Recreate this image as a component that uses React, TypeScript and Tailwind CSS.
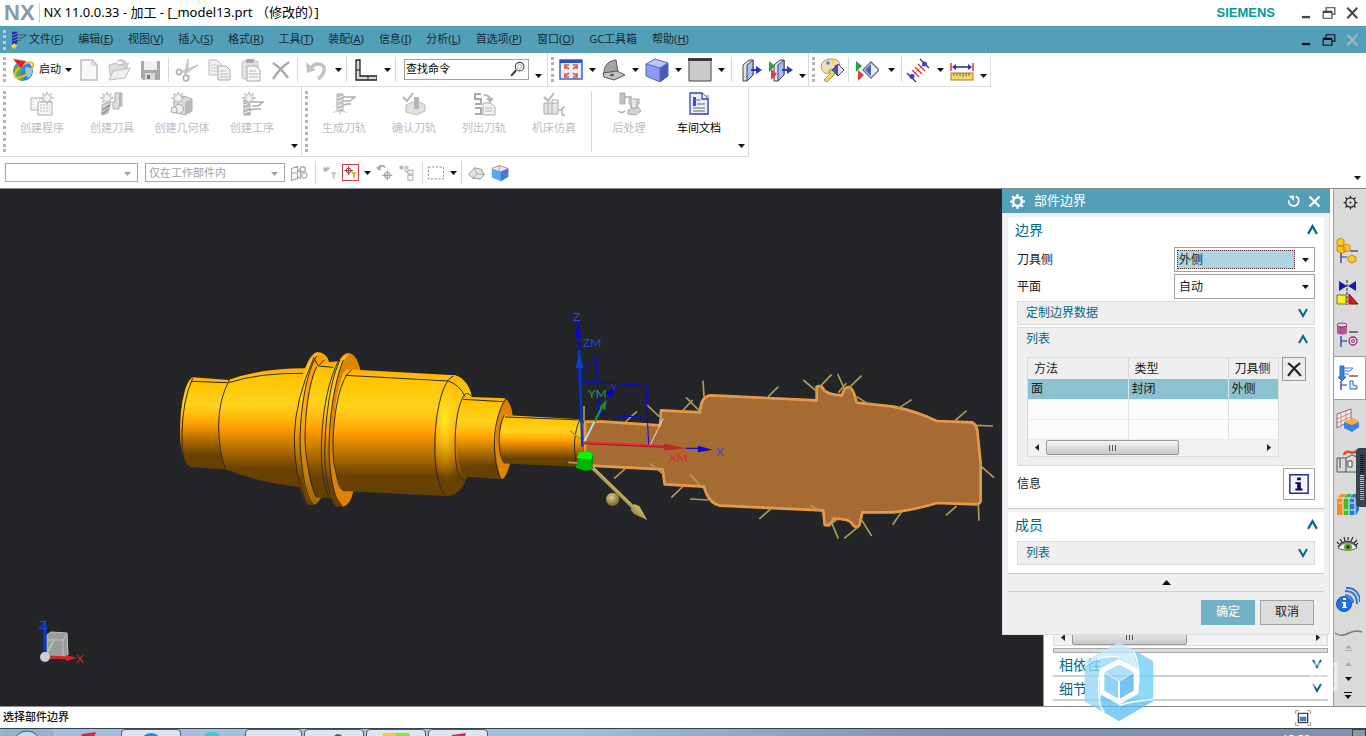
import { useState, type ReactNode } from 'react';
import clsx from 'clsx';

interface IconProps { size?: number; children: ReactNode; }

const Icon = ({ size = 24, children }: IconProps) => (
  <svg width={size} height={size} viewBox="0 0 24 24" fill="none" aria-hidden="true" className="shrink-0">
    {children}
  </svg>
);

const Arrow = ({ gray }: { gray?: boolean }) => (
  <svg width="7" height="4" viewBox="0 0 7 4" aria-hidden="true" className="shrink-0">
    <path d="M0 0h7L3.5 4z" fill={gray ? '#a0a0a0' : '#111'} />
  </svg>
);

const Chevron = ({ up, size = 10 }: { up?: boolean; size?: number }) => (
  <svg width={size} height={size} viewBox="0 0 10 10" fill="none" aria-hidden="true" className="shrink-0">
    <path d={up ? 'M1 9l4-7 4 7' : 'M1 1l4 7 4-7'} stroke="#046587" strokeWidth="2" />
  </svg>
);

const Grip = ({ narrow }: { narrow?: boolean }) => (
  <div className={clsx('shrink-0 py-1 pl-[3px]', narrow ? 'w-[7px]' : 'w-[9px]')}>
    <div className="h-full border-l-[3px] border-dotted border-[#b4b4b4]" />
  </div>
);
const Sep = () => <div className="mx-[2px] my-1 w-px shrink-0 bg-[#d9d9d9]" />;

const Drop = ({ w, low, label }: { w: string; low?: boolean; label: string }) => (
  <button aria-label={label} className={clsx('flex shrink-0 justify-center', w, low ? 'items-end pb-2' : 'items-center')}>
    <Arrow />
  </button>
);

const Tool = ({ w, label, children }: { w: string; label: string; children: ReactNode }) => (
  <button aria-label={label} className={clsx('flex shrink-0 items-center justify-center', w)}>{children}</button>
);

/* ---------- icons ---------- */
const Star = ({ x, y }: { x: number; y: number }) => (
  <path transform={`translate(${x} ${y})`} d="M0-6l1.3 3.4L4.5-4.5 2.8-1.2 6.5 0 2.8 1.2 4.5 4.5 1.3 2.8 0 6-1.3 2.8-4.5 4.5-2.8 1.2-6.5 0-2.8-1.2-4.5-4.5-1.3-2.6z" fill="#f2f2f2" stroke="#b5b5b5" strokeWidth=".9" />
);
const Globe = () => (
  <Icon>
    <circle cx="12" cy="13" r="10" fill="#2f86dc" />
    <path d="M4 9c4-3 8 0 6 5s4 4 2 9C5 22 1 16 4 9z" fill="#5cb13a" />
    <path d="M15 9c4 0 7 2 6 6s-4 6-5 4-3-8-1-10z" fill="#7cc7f4" />
    <ellipse cx="13" cy="12" rx="11" ry="5" transform="rotate(-38 13 12)" stroke="#e3bb3e" strokeWidth="2" />
    <path d="M2 1l13 2-5 8z" fill="#d6272c" stroke="#f08a86" strokeWidth=".6" />
  </Icon>
);
const Page = () => <Icon><path d="M4 2h11l5 5v15H4z" fill="#f8f8f8" stroke="#bcbcbc" strokeWidth="1.5" /><path d="M15 2v5h5" stroke="#bcbcbc" /></Icon>;
const Folder = () => (
  <Icon><path d="M2 7l7-2 3 2 8-2v6L4 22z" fill="#ddd" stroke="#bbb" /><path d="M2 22l4-9 17-3-5 10z" fill="#efefef" stroke="#bbb" /><path d="M10 4c3-4 8-3 10 2l2-1-3 5-4-3 2-1c-1-3-4-4-7-2z" fill="#d4d4d4" stroke="#b5b5b5" strokeWidth=".6" /></Icon>
);
const Save = () => <Icon><path d="M3 3h19v19H5l-2-2z" fill="#a8a8a8" /><path d="M6 3h13v9H6z" fill="#f0f0f0" /><path d="M7 15h10v7H7z" fill="#d8d8d8" /><path d="M9 17h3v4H9z" fill="#777" /></Icon>;
const Cut = () => <Icon><path d="M13 1l-3 13 3-1zM23 7L8 13l2 3z" fill="#e4e4e4" stroke="#b8b8b8" /><circle cx="4" cy="14" r="2.600" stroke="#b2b2b2" strokeWidth="1.800" /><circle cx="11" cy="20" r="2.800" stroke="#b2b2b2" strokeWidth="1.800" /></Icon>;
const Copy = () => (
  <Icon><path d="M2 2h8l4 4v11H2z" fill="#f2f2f2" stroke="#bababa" /><path d="M4 7h7M4 10h7M4 13h7" stroke="#c8c8c8" /><path d="M11 8h8l4 4v10H11z" fill="#f2f2f2" stroke="#a8a8a8" /><path d="M13 13h6M13 16h8M13 19h8" stroke="#b8b8b8" /></Icon>
);
const Paste = () => (
  <Icon><rect x="3" y="3" width="16" height="18" rx="2" fill="#e2e2e2" stroke="#bcbcbc" /><rect x="7" y="1" width="8" height="4" rx="1" fill="#aaa" /><path d="M8 8h9l4 4v11H8z" fill="#f7f7f7" stroke="#a8a8a8" /><path d="M10 13h7M10 16h9M10 19h9" stroke="#b8b8b8" /></Icon>
);
const Del = () => <Icon><path d="M4 5c5 3 10 8 15 15M20 4C14 8 9 13 4 21" stroke="#a9a9a9" strokeWidth="2.4" /></Icon>;
const Undo = () => <Icon><path d="M7 10c4-6 15-5 13 3-1 4-3 6-6 8" stroke="#c2c2c2" strokeWidth="3.500" /><path d="M2 4l1 11 9-3z" fill="#c2c2c2" /></Icon>;
const EdgeBar = () => <Icon><path d="M3 2h4v16h17v4H3z" fill="#d8d8d8" stroke="#222" strokeWidth="1.3" /><path d="M3 12h4M15 18v4" stroke="#222" /></Icon>;
const Fit = () => (
  <Icon><path d="M1 2h22v19H1z" fill="#e8f0ff" stroke="#3b62d8" strokeWidth="1.5" /><path d="M1 2h22v3H1z" fill="#2a50c8" /><path d="M6 8l4 3M18 8l-4 3M6 18l4-3M18 18l-4-3" stroke="#e8532c" strokeWidth="1.6" /><path d="M6 11V7h4M14 7h4v4M6 15v4h4M14 19h4v-4" stroke="#e8532c" strokeWidth="1.6" /></Icon>
);
const Bracket3d = () => <Icon><path d="M2 13C3 6 7 3 14 2l2 12-12 5z" fill="#a5a5a5" stroke="#555" /><path d="M1 15l14-2 8 4-11 5-10-3z" fill="#c4c4c4" stroke="#555" /><ellipse cx="10" cy="17" rx="2" ry="1.2" fill="#555" /></Icon>;
const Cube = () => <Icon><path d="M1 6l9-5 13 4v13l-8 6L1 18z" fill="#8b9dec" /><path d="M1 6l9-5 13 4-8 5z" fill="#b9c6fa" /><path d="M15 10l8-5v13l-8 6z" fill="#4a5cba" /><path d="M1 6l14 4v14M15 10l8-5M1 6v12l14 6 8-6V5L10 1z" stroke="#5365c0" /></Icon>;
const Slab = ({ flip }: { flip?: boolean }) => (
  <Icon>
    <path d="M5 7l6-5h4v15l-6 6H5z" fill="#e3e3e3" stroke="#444" /><path d="M9 7l6-5v15l-6 6z" fill="#a9bdf8" stroke="#333b70" />
    <path d="M13 12h7" stroke="#2a30d0" strokeWidth="2" /><path d="M18 8l6 4-6 4z" fill="#2a30d0" />
    {flip && <><path d="M0 3l6 5-6 6z" fill="#27a53b" /><path d="M2 11l6 5-6 6z" fill="#d64040" /></>}
  </Icon>
);
const Palette = () => (
  <Icon><path d="M2 12C-1 5 5 1 11 1s10 3 8 8-8 0-9 4-6 3-8-1z" fill="#f0dfb8" stroke="#a68f5c" /><circle cx="8" cy="5" r="1.8" fill="#2b8be0" /><circle cx="13" cy="4.500" r="1.800" fill="#f4d525" /><circle cx="16" cy="8" r="1.500" fill="#e6432b" /><path d="M9 12h7l-2 5-7 7-3-2 6-6z" fill="#f3d256" stroke="#b3953a" /><path d="M12 12l6-6 6 6-6 6z" fill="#dfe3f8" stroke="#3c4a7a" /><path d="M18 6v12l-6-6z" fill="#3a54b8" /></Icon>
);
const Flip = () => <Icon><path d="M8 12l8-8 8 8-8 8z" fill="#eef0fb" stroke="#6d7486" strokeWidth="1.500" /><path d="M16 6v12l-6-6z" fill="#4a63c8" /><path d="M1 3l6 5-6 6z" fill="#27a53b" /><path d="M3 12l6 5-6 6z" fill="#d64040" /></Icon>;
const Distance = () => <Icon><path d="M14 1l9 9M1 15l9 9" stroke="#333" strokeWidth="1.300" /><path d="M5 19L19 5" stroke="#c33" strokeDasharray="2 1" /><path d="M6 12l7 7M9 9l7 7M12 6l7 7" stroke="#d33" strokeWidth="1.300" /><circle cx="18.500" cy="6" r="2.500" fill="#3344d8" /><circle cx="6" cy="18.500" r="2.500" fill="#3344d8" /></Icon>;
const Ruler = () => <Icon><path d="M1 5v8M23 5v8" stroke="#d22" strokeWidth="1.400" /><path d="M3 9h18" stroke="#2733b8" strokeWidth="1.600" /><path d="M2 9l4-3v6zM22 9l-4-3v6z" fill="#2733b8" /><rect x="1" y="15" width="22" height="7" fill="#f5d868" stroke="#a17e27" /><path d="M4 15v3M7 15v3M10 15v3M13 15v4M16 15v3M19 15v3" stroke="#666" /></Icon>;

const Drill = () => <><path d="M5 2h6v17H5z" fill="#c2c2c2" stroke="#ababab" /><path d="M5 6l6-2M5 10l6-2M5 14l6-2M5 18l6-2" stroke="#f4f4f4" /></>;
const Prog = () => (
  <Icon><path d="M1 6h15v12H1z" fill="#fafafa" stroke="#ababab" /><path d="M3 8h11v8H3z" stroke="#c5c5c5" strokeDasharray="1 2" /><path d="M8 10h14v13H8z" fill="#fafafa" stroke="#ababab" /><path d="M10 13h10M10 16h10M10 19h10" stroke="#b5b5b5" strokeDasharray="2 1" /><Star x={17} y={6} /></Icon>
);
const ToolMake = () => <Icon><path d="M2 13l8-4v4l-2 8-6 2z" fill="#d5d5d5" stroke="#aaa" /><path d="M2 18l8-5M2 22l7-5" stroke="#999" strokeWidth="2" /><path d="M15 1h7v13h-3v3h-6v-7h2z" fill="#ddd" stroke="#ababab" /><path d="M20 1v13" stroke="#b5b5b5" strokeWidth="2" /><Star x={7} y={6} /></Icon>;
const Geo = () => <Icon><path d="M4 8l10-4 8 3v12l-7 4-11-3z" fill="#ddd" stroke="#aaa" /><path d="M15 10l7-3v12l-7 4z" fill="#b8b8b8" /><circle cx="9" cy="17" r="4.500" fill="#eee" stroke="#aaa" /><circle cx="4" cy="18" r="3" fill="#eee" stroke="#aaa" /><Star x={8} y={6} /></Icon>;
const Op = () => <Icon><path d="M4 8h6v15H4z" fill="#bbb" stroke="#a5a5a5" /><path d="M4 13l6-2M4 17l6-2M4 21l6-2" stroke="#f4f4f4" /><path d="M10 10h13l-5 4h-6M10 18l4-1h7" stroke="#adadad" strokeWidth="1.500" /><Star x={9} y={6} /></Icon>;
const Gen = () => <Icon><Drill /><path d="M11 5h12l-5 4h-7M11 13l4-1h4" stroke="#adadad" strokeWidth="1.500" /><path d="M1 21l4-2M8 23v-3M15 21l-4-2" stroke="#c9c9c9" /></Icon>;
const Verify = () => <Icon><path d="M4 13l6-3h8l5 3v6l-8 4-11-3z" fill="#e1e1e1" stroke="#bbb" /><path d="M12 5h5v12h-5z" fill="#b5b5b5" /><path d="M1 5l4 4 6-8" stroke="#b5b5b5" strokeWidth="2" /></Icon>;
const ListPath = () => <Icon><path d="M9 2H3v5h6v5H3M3 16h6v6H3M3 12" stroke="#a8a8a8" strokeWidth="2" /><path d="M12 3c4 0 6 1 6 5" stroke="#b5b5b5" strokeWidth="2" /><path d="M14 6h8l-4 5z" fill="#b5b5b5" /><path d="M11 11h8l4 4v8H11z" fill="#f1f1f1" stroke="#ababab" /><path d="M13 16h7M13 19h7" stroke="#b5b5b5" /></Icon>;
const Simulate = () => <Icon><path d="M2 11h14v11H2z" fill="#e5e5e5" stroke="#aaa" /><path d="M6 11v11M10 8v14M10 8h6v3" stroke="#aaa" /><path d="M16 18h4v5h3M20 18c0-2 1-3 3-3" stroke="#b0b0b0" strokeWidth="1.500" /><path d="M2 5l4 4 6-8" stroke="#b5b5b5" strokeWidth="2" /></Icon>;
const Post = () => <Icon><path d="M3 1h5v11H3z" fill="#c2c2c2" stroke="#ababab" /><path d="M8 5h6l-1 4M1 19c3 2 5 2 7 0" stroke="#aaa" strokeWidth="1.500" /><path d="M12 7h10v5h-2v4h-6v-4h-2zM14 7v9M20 7v9" fill="#e6e6e6" stroke="#aaa" /><path d="M11 18l10-3 3 4-5 4-8-1z" fill="#d2d2d2" stroke="#aaa" /></Icon>;
const ShopDoc = () => <Icon><path d="M6 3h16v20H6z" fill="#b9c2ee" /><path d="M3 1h12l6 6v15H3z" fill="#e9edff" stroke="#3a46a8" strokeWidth="1.300" /><path d="M15 1v6h6" fill="#fff" stroke="#3a46a8" strokeWidth="1.300" /><path d="M6 5h3v9H6z" fill="#3a55c8" /><path d="M9 8h4M10 12h8M6 16h12M6 19h12" stroke="#666" /></Icon>;

const Filter = ({ c }: { c: string }) => <path d="M13 11h9l-3 4v7l-3-2v-5z" fill={c} />;
const Target = ({ c, x = 8, y = 8 }: { c: string; x?: number; y?: number }) => (
  <g transform={`translate(${x} ${y})`} stroke={c} strokeWidth="1.600"><circle r="4" /><path d="M-7 0H7M0-7V7" /></g>
);

const FileMenuIcon = () => (
  <Icon size={18}><path d="M4 1h7v16H4z" fill="#1c2f9e" /><path d="M4 6l7-3M4 10l7-3M4 14l7-3" stroke="#7e9df0" /><path d="M11 5h12l-5 4h-7M11 13l5-1" stroke="#3b606e" strokeWidth="1.500" /><path d="M7 16l2 3 3 0-3 2v3l-2-2-3 2v-3l-2-2h3z" fill="#ffd83a" /></Icon>
);

/* ---------- menus and toolbars ---------- */
const menus = [
  ['文件', 'F'], ['编辑', 'E'], ['视图', 'V'], ['插入', 'S'], ['格式', 'R'], ['工具', 'T'], ['装配', 'A'],
  ['信息', 'I'], ['分析', 'L'], ['首选项', 'P'], ['窗口', 'O'], ['GC工具箱', ''], ['帮助', 'H'],
];

const WindowButtons = ({ color, close }: { color: string; close: string }) => (
  <div className="flex items-center gap-[9px]">
    <button aria-label="最小化"><Icon size={14}><path d="M5 19h14" stroke={color} strokeWidth="4" /></Icon></button>
    <button aria-label="还原"><Icon size={14}><path d="M7 9V3h15v11h-5M2 10h15v11H2z" stroke={color} strokeWidth="2" /><path d="M2 10h15" stroke={color} strokeWidth="4" /></Icon></button>
    <button aria-label="关闭"><Icon size={14}><path d="M4 3l17 18M21 3L4 21" stroke={close} strokeWidth="3.500" /></Icon></button>
  </div>
);

function TitleBar() {
  return (
    <header className="flex h-[26px] shrink-0 items-center bg-white pl-1">
      <b className="font-['Liberation_Sans',Arial,sans-serif] text-[22px] leading-6 text-[#8799a8]">NX</b>
      <div className="ml-1 h-5 w-px bg-[#ccc]" />
      <h1 className="ml-1 text-[13px] text-black">NX 11.0.0.33 - 加工 - [_model13.prt （修改的）]</h1>
      <b className="mr-6 ml-auto font-['Liberation_Sans',Arial,sans-serif] text-[13px] text-[#009999]">SIEMENS</b>
      <div className="pr-[7px]"><WindowButtons color="#444" close="#444" /></div>
    </header>
  );
}

function MenuBar() {
  return (
    <nav className="flex h-[27px] shrink-0 items-center bg-[#549fb8] pr-[7px] text-[11px] text-[#152a33]">
      <div className="h-5 w-[9px] pl-[3px]"><div className="h-full border-l-[3px] border-dotted border-[#b5d3de]" /></div>
      <FileMenuIcon />
      <div className="flex gap-[15px] pb-px pl-[2px]">
        {menus.map(([name, key]) => (
          <button key={name} className="whitespace-nowrap">
            {name}{key && <>(<u>{key}</u>)</>}
          </button>
        ))}
      </div>
      <div className="ml-auto"><WindowButtons color="#111" close="#a9b5ba" /></div>
    </nav>
  );
}

function StandardToolbar() {
  return (
    <div className="flex h-[34px] shrink-0">
      <div className="flex border-r border-b border-[#dcdcdc]">
        <Grip />
        <button className="flex w-[65px] items-center gap-1 pl-[2px] text-[11px] whitespace-nowrap"><Globe />启动<Arrow /></button>
        <Tool w="w-[30px]" label="新建"><Page /></Tool>
        <Tool w="w-[30px]" label="打开"><Folder /></Tool>
        <Tool w="w-8" label="保存"><Save /></Tool>
        <Sep />
        <Tool w="w-8" label="剪切"><Cut /></Tool>
        <Tool w="w-8" label="复制"><Copy /></Tool>
        <Tool w="w-8" label="粘贴"><Paste /></Tool>
        <Tool w="w-7" label="删除"><Del /></Tool>
        <Sep />
        <Tool w="w-8" label="撤销"><Undo /></Tool>
        <Drop w="w-3" label="撤销列表" />
        <Sep />
        <Tool w="w-8" label="边条"><EdgeBar /></Tool>
        <Drop w="w-3" label="边条列表" />
        <Sep />
        <label className="my-[6px] ml-1.5 flex w-[125px] items-center border border-[#a3a3a3] bg-white pr-0.5">
          <input aria-label="查找命令" defaultValue="查找命令" className="w-0 flex-1 pl-[1px] text-[11px] text-black outline-none" />
          <Icon size={17}><circle cx="15" cy="8" r="6" stroke="#444" strokeWidth="1.600" /><circle cx="15" cy="8" r="3" stroke="#999" /><path d="M10 13l-7 8" stroke="#444" strokeWidth="3" /></Icon>
        </label>
        <Drop w="w-[18px]" low label="工具条选项" />
      </div>
      <div className="flex border-r border-b border-[#dcdcdc]">
        <Grip />
        <Tool w="w-[27px]" label="适合窗口"><Fit /></Tool><Drop w="w-4" label="视图操作" />
        <Tool w="w-[27px]" label="定向视图"><Bracket3d /></Tool><Drop w="w-4" label="定向视图列表" />
        <Tool w="w-[27px]" label="带边着色"><Cube /></Tool><Drop w="w-4" label="着色列表" />
        <Tool w="w-[27px]" label="背景"><Icon><path d="M1 1h22v22H1z" fill="#cbcbcb" stroke="#444" /><path d="M0 0h24v3H0z" fill="#3a3a3a" /></Icon></Tool><Drop w="w-4" label="背景列表" />
        <Sep />
        <Tool w="w-8" label="剪切截面"><Slab /></Tool>
        <Tool w="w-[30px]" label="编辑截面"><Slab flip /></Tool>
        <Drop w="w-3" low label="视图选项" />
      </div>
      <div className="flex border-r border-b border-[#dcdcdc]">
        <Grip />
        <Tool w="w-7" label="编辑对象显示"><Palette /></Tool>
        <Sep />
        <Tool w="w-8" label="显示和隐藏"><Flip /></Tool><Drop w="w-4" label="显示列表" />
        <Sep />
        <Tool w="w-7" label="测量距离"><Distance /></Tool><Drop w="w-4" label="测量列表" />
        <Tool w="w-7" label="测量"><Ruler /></Tool><Drop w="w-[14px]" low label="实用工具选项" />
      </div>
    </div>
  );
}

const createTools: [string, () => ReactNode][] = [['创建程序', Prog], ['创建刀具', ToolMake], ['创建几何体', Geo], ['创建工序', Op]];
const pathTools: [string, () => ReactNode][] = [['生成刀轨', Gen], ['确认刀轨', Verify], ['列出刀轨', ListPath], ['机床仿真', Simulate]];
const postTools: [string, () => ReactNode][] = [['后处理', Post], ['车间文档', ShopDoc]];

const BigTools = ({ items }: { items: [string, () => ReactNode][] }) => (
  <>
    {items.map(([name, Pic]) => (
      <button key={name} className={clsx('flex w-[70px] flex-col items-center gap-1 pt-[5px] text-[11px] whitespace-nowrap', name === '车间文档' ? 'text-black' : 'text-[#bdbdbd]')}>
        <Pic />{name}
      </button>
    ))}
  </>
);

function MachiningToolbar() {
  return (
    <div className="flex h-[70px] shrink-0">
      <div className="flex border-r border-b border-[#dcdcdc]">
        <Grip narrow /><BigTools items={createTools} /><Drop w="w-[14px]" low label="插入选项" />
      </div>
      <div className="flex border-r border-b border-[#dcdcdc]">
        <Grip narrow /><BigTools items={pathTools} /><Sep /><BigTools items={postTools} /><Drop w="w-[14px]" low label="操作选项" />
      </div>
    </div>
  );
}

const GraySelect = ({ w, label, value }: { w: string; label: string; value: string }) => (
  <div className={clsx('relative my-[6px] flex border border-[#a8a8a8]', w)}>
    <select aria-label={label} disabled className="w-full appearance-none pl-[3px] text-[11px] leading-4 text-[#a3a3a3] opacity-100"><option>{value}</option></select>
    <div className="pointer-events-none absolute top-2 right-[6px] flex"><Arrow gray /></div>
  </div>
);

function SelectionBar() {
  return (
    <div className="flex h-[31px] shrink-0 pl-[5px]">
      <GraySelect w="w-[133px]" label="类型过滤器" value="" />
      <div className="w-[7px]" />
      <GraySelect w="w-[140px]" label="选择范围" value="仅在工作部件内" />
      <Tool w="w-7" label="装配过滤"><Icon size={18}><path d="M2 6l8-3v16l-8 3zM2 12h8M10 8l4 3v8l-4-2" stroke="#a8a8a8" strokeWidth="1.500" /><circle cx="17" cy="7" r="3.500" stroke="#aaa" strokeWidth="2" /><circle cx="19" cy="15" r="3.500" stroke="#bbb" strokeWidth="2" /></Icon></Tool>
      <Sep />
      <Tool w="w-6" label="重置过滤器"><Icon size={16}><path d="M2 2v7l6 1V7c4 1 5-3 3-5 0 3-2 2-3 2V2L5 5z" fill="#b5b5b5" /><Filter c="#c4c4c4" /></Icon></Tool>
      <Tool w="w-4" label="常规选择过滤器"><span className="border border-[#d2384a] bg-white"><Icon size={15}><Target c="#8d3a3a" x={9} y={9} /><Filter c="#f3a71e" /></Icon></span></Tool>
      <Drop w="w-[18px]" label="过滤器列表" />
      <Tool w="w-4" label="撤销选择"><Icon size={17}><path d="M3 8c1-6 7-7 10-3" stroke="#a8a8a8" strokeWidth="2.500" /><path d="M0 5l6 5 1-7z" fill="#a8a8a8" /><Target c="#a5a5a5" x={16} y={16} /></Icon></Tool>
      <Tool w="w-7" label="链选择"><Icon size={17}><circle cx="5" cy="5" r="3" fill="#b5b5b5" /><circle cx="12" cy="5" r="3" fill="#c5c5c5" /><path d="M8 8l6 4M14 9h7v5h-7zM14 16h7v7h-7z" stroke="#b0b0b0" strokeWidth="1.500" /></Icon></Tool>
      <Sep />
      <Tool w="w-[22px]" label="矩形选择"><Icon size={18}><path d="M2 4h20v16H2z" stroke="#888" strokeWidth="1.300" strokeDasharray="3 2" /></Icon></Tool>
      <Drop w="w-3" label="选择列表" />
      <Sep />
      <Tool w="w-6" label="高亮面"><Icon size={18}><path d="M2 14l8-9 9 2 4 7-5 6-10-1z" fill="#e3e3e3" stroke="#999" strokeWidth="1.300" /><path d="M10 5l3 8-5 6M13 13l10 1" stroke="#999" /></Icon></Tool>
      <Tool w="w-6" label="着色体"><Icon size={18}><path d="M1 6l10-4 12 4v11l-10 6-12-5z" fill="#59a7f3" /><path d="M1 6l10-4 12 4-10 4z" fill="#e3edf8" /><path d="M13 10l10-4v11l-10 6z" fill="#397bdc" /><path d="M1 6l10-4 12 4M11 2v9l12 5" stroke="#e05a6a" /></Icon></Tool>
      <div className="ml-auto flex"><Drop w="w-[18px]" low label="选择条选项" /></div>
    </div>
  );
}

/* ---------- graphics window ---------- */
const bodyStops = (
  <>
    <stop offset="0" stopColor="#ffae00" /><stop offset=".08" stopColor="#ffc400" /><stop offset=".3" stopColor="#ffd21c" />
    <stop offset=".42" stopColor="#ffb80e" /><stop offset=".5" stopColor="#ff9d02" /><stop offset=".66" stopColor="#b97300" />
    <stop offset=".84" stopColor="#6b4200" /><stop offset="1" stopColor="#644000" />
  </>
);

const ticks = 'M429 242l3 48M625 290l30-30M730 240l40 34M775 265l40-42M833 222l22 48M865 265l40-38M835 278l24-28M890 290l32 20M1015 325l40-26M1185 362l35-30M1245 376l54 2M1262 498l40 35M1255 612l2 50M1190 618l-32 28M1026 634l-28 40M905 660l30 48M895 680l-42 35M815 668l20 48M805 680l25-22M788 636l-38-20M632 627l-34 30M445 600l-55-3M420 556l-30-34M370 558l-36 35M310 522l-40-32M196 506l-34 30M72 318v44M196 366l35-32M300 352l-40-38M420 334l-42-42M366 334l32-34M70 425l-40-34M70 490l-46-3';

const section = 'M75 365H130L300 376L303 331L420 337Q422 286 455 286L770 301V260Q785 254 793 272Q810 285 846 286Q852 262 866 261Q880 262 890 308L1000 320Q1070 334 1130 363L1235 367Q1248 372 1252 392L1262 490V603Q1260 612 1250 613L1130 609Q1080 626 1000 637H907L898 676Q888 690 874 668Q866 657 820 656Q812 680 794 675L790 631L480 617Q445 610 432 560L314 553L308 508L75 496z';

const edges = 'M68 235Q38 300 36 400T62 502M65 244L172 248M178 240Q146 300 146 375T166 507M175 248Q270 218 400 220M432 172Q375 300 373 410T410 614M440 168C400 230 385 390 392 460S408 590 430 614M440 200C410 260 400 400 408 460S430 580 440 592M430 172L445 198 490 202M445 198L462 180M505 183C455 280 448 450 458 520S480 590 490 605M510 180C470 260 460 440 466 500S475 560 480 580M520 180C480 280 470 440 482 520S505 600 516 618M545 210C495 240 480 440 494 500S505 565 525 573M526 226L835 243M850 228C800 250 780 450 805 540Q815 580 830 588M835 243Q870 255 885 290M905 290Q890 270 880 290C850 340 850 480 865 520Q875 550 890 538M880 298L1000 305M1008 296C965 360 965 470 990 535M1003 345C980 390 985 470 1003 490M1005 351L1235 360M1230 358C1210 400 1210 450 1220 495';

function GraphicsWindow() {
  return (
    <svg role="img" aria-label="图形窗口" className="h-full min-w-0 flex-1 bg-[#242529] font-[Lato,sans-serif]">
      <defs>
        <linearGradient id="shaft" x1="0" y1="0" x2="0" y2="1">{bodyStops}</linearGradient>
        <linearGradient id="lip" x1="0" y1="0" x2="0" y2="1"><stop offset="0" stopColor="#ff9d00" /><stop offset=".4" stopColor="#ffab08" /><stop offset="1" stopColor="#a46600" /></linearGradient>
        <radialGradient id="glow" cx=".25" cy=".38" r=".5"><stop offset="0" stopColor="#fff028" stopOpacity=".9" /><stop offset="1" stopColor="#ffa400" stopOpacity="0" /></radialGradient>
        <radialGradient id="ball" cx=".4" cy=".35" r=".7"><stop offset="0" stopColor="#e3cf86" /><stop offset="1" stopColor="#6c5c2a" /></radialGradient>
        <linearGradient id="cone" x1="0" y1="1" x2="1" y2="0"><stop offset="0" stopColor="#6c5c2a" /><stop offset=".6" stopColor="#c9b367" /><stop offset="1" stopColor="#96833f" /></linearGradient>
      </defs>

      {/* shaded solid */}
      <g transform="translate(170 111) scale(.33333)">
        <path d="M68 232L178 240L168 508L62 502Q36 485 30 420Q28 330 45 270Q55 238 68 232z" fill="url(#shaft)" />
        <path d="M175 240Q270 205 405 205V563Q270 550 165 507Q146 450 146 370Q150 290 175 240z" fill="url(#shaft)" />
        <path d="M440 156Q470 156 478 190L455 592Q442 618 415 615C385 590 374 500 375 385C385 260 405 170 440 156z" fill="url(#shaft)" />
        <path d="M440 166C465 160 474 170 476 186L445 200C420 240 405 330 408 430C410 520 425 590 452 594Q440 616 428 614C400 590 391 500 393 385C400 290 415 200 440 166z" fill="url(#lip)" />
        <path d="M445 190L510 183L500 595L440 592C410 540 405 440 412 350Q420 240 445 190z" fill="url(#shaft)" />
        <path d="M530 160Q558 158 570 208L548 576Q542 620 500 620C465 590 455 500 460 395C468 270 495 175 530 160z" fill="url(#shaft)" />
        <path d="M540 160Q560 165 570 210L524 215C500 260 488 350 491 440C494 520 505 573 550 573Q542 616 518 620C490 600 478 520 480 400C485 280 505 190 540 160z" fill="#df8400" />
        <path d="M530 208L855 226Q895 240 905 290L890 533Q870 585 830 588L520 573Q490 540 490 430Q492 300 520 220z" fill="url(#shaft)" />
        <path d="M855 226Q895 240 905 290L875 330L858 410L862 500L890 535Q870 588 830 588Q798 560 798 430Q802 280 835 230z" fill="url(#shaft)" />
        <path d="M855 226Q895 240 905 290L875 330L858 410L862 500L890 535Q870 588 830 588Q798 560 798 430Q802 280 835 230z" fill="url(#glow)" />
        <path d="M885 290L1005 295L1018 490L995 537L885 530Q860 500 858 400Q862 310 885 290z" fill="url(#shaft)" />
        <path d="M1005 295Q1024 308 1028 347L1003 345Q988 380 988 420Q990 470 1003 490H1020Q1008 537 995 537Q976 500 976 420Q980 330 1005 295z" fill="#df8400" />
        <path d="M1003 345L1230 358L1240 372V490L1220 500L1003 490Q988 460 988 420Q990 370 1003 345z" fill="url(#shaft)" />
        <path d={edges} fill="none" stroke="#2c2a2e" strokeWidth="3" strokeLinejoin="round" />
      </g>

      {/* section face with boundary ticks */}
      <g transform="translate(560 111) scale(.33333)" fill="none">
        <path d={section} fill="#a66b33" stroke="#f49a43" strokeWidth="8" strokeLinejoin="round" />
        <path d={section} stroke="#b0a05c" strokeWidth="4" strokeDasharray="6 8" />
        <path d={ticks} stroke="#ae9a56" strokeWidth="5" />
        <path d="M53 62L60 340M66 236L107 165L117 345L300 354M64 246L258 256L266 436M117 345L160 262M380 445H420" stroke="#0505f2" strokeWidth="3" />
        <path d="M270 436L310 355" stroke="#ddd" strokeWidth="3" />
        <path d="M54 65L64 112H45z" fill="#0707da" />
        <path d="M57 150L67 440" stroke="#0936cc" strokeWidth="7" />
        <path d="M57 145L70 205H48z" fill="#0b3fd1" />
        <path d="M73 425L105 362" stroke="#b5e6d5" strokeWidth="6" />
        <path d="M104 365L124 325" stroke="#2f8b38" strokeWidth="7" /><path d="M140 298L136 330 117 322z" fill="#1f8a2b" />
        <path d="M166 256L157 292 138 282z" fill="#0707c2" />
        <path d="M72 427L320 438" stroke="#ed2738" strokeWidth="6" /><path d="M72 431L320 442" stroke="#95171f" strokeWidth="3" /><path d="M312 431L378 445L312 452z" fill="#c2262c" />
        <path d="M378 445H420" stroke="#0707e0" strokeWidth="3" /><path d="M414 437L457 449L414 457z" fill="#0707d6" />
        <path d="M98 504L226 628" stroke="#b19c56" strokeWidth="11" /><path d="M98 500L222 620" stroke="#e1cc85" strokeWidth="2" />
        <path d="M212 630L222 612L238 618L262 660L222 642z" fill="url(#cone)" />
        <circle cx="158" cy="598" r="20" fill="url(#ball)" />
        <path d="M56 460L72 454L100 460L96 510L76 512L48 504z" fill="#00b400" /><path d="M50 474L58 457L88 456L100 462L94 478z" fill="#00fb08" /><path d="M94 478L100 462L96 508z" fill="#007e00" />
      </g>
      <g fontSize="12">
        <text x="573" y="132" fill="#4040ee">Z</text>
        <text x="583" y="158" fill="#0c4cf0">ZM</text>
        <text x="588" y="209" fill="#2f9a3c">YM</text>
        <text x="611" y="202" fontSize="9" fill="#3535cc">Y</text>
        <text x="669" y="273" fill="#d0302d">XM</text>
        <text x="716" y="267" fill="#4646d8">X</text>
      </g>

      {/* view triad */}
      <path d="M47 446l4-3 16 1 1 22-4 3H47z" fill="#9c9c9c" stroke="#c4c4c4" />
      <path d="M47 451h16l4-6M63 451v18" fill="none" stroke="#c2c2c2" />
      <path d="M46 466l8-15" stroke="#a1cda8" strokeWidth="2" />
      <path d="M45 466v-30" stroke="#0a3ad5" strokeWidth="3" /><path d="M45 429l2 12h-5z" fill="#0a3ad5" />
      <path d="M46 468l24 1" stroke="#d12729" strokeWidth="3" /><path d="M66 466l11 3-11 3z" fill="#d12729" />
      <circle cx="45" cy="468" r="5" fill="#cfcfcf" />
      <g fontSize="12">
        <text x="39" y="440" fill="#1046ee">Z</text>
        <text x="51" y="455" fontSize="10" fill="#8fbb94">Y</text>
        <text x="76" y="474" fill="#c52a2a">X</text>
      </g>
    </svg>
  );
}

/* ---------- dialog ---------- */
const HScroll = ({ thumb }: { thumb: string }) => (
  <div className="flex h-4 items-center bg-[#f1f1f1]">
    <button aria-label="向左滚动" className="flex w-[18px] justify-center"><svg width="4" height="7"><path d="M4 0v7L0 3.500z" fill="#222" /></svg></button>
    <div className={clsx('flex h-[15px] items-center justify-center gap-[2px] rounded-xs border border-[#999] bg-linear-to-b from-[#f3f3f3] to-[#c8c8c8]', thumb)}>
      {[0, 1, 2].map((i) => <i key={i} className="h-[6px] w-px bg-[#555]" />)}
    </div>
    <button aria-label="向右滚动" className="ml-auto flex w-[18px] justify-center"><svg width="4" height="7"><path d="M0 0v7l4-3.500z" fill="#222" /></svg></button>
  </div>
);

const SectionTitle = ({ children }: { children: ReactNode }) => (
  <button className="flex h-[25px] w-full items-center justify-between pr-[6px] pl-[7px] text-[14px] text-[#046587]">{children}<Chevron up size={11} /></button>
);

interface FieldProps { id: string; label: string; options: string[]; active?: boolean; }
function Field({ id, label, options, active }: FieldProps) {
  return (
    <div className="flex h-[25px] items-center justify-between text-[12px]">
      <label htmlFor={id}>{label}</label>
      <div className="relative flex h-full w-[141px] border border-[#a3a3a3] bg-white p-[2px]">
        <select id={id} className={clsx('mr-[17px] w-0 flex-1 appearance-none border border-dotted pl-[1px] outline-none', active ? 'border-[#5a2b2b] bg-[#add6e1]' : 'border-transparent')}>
          {options.map((o) => <option key={o}>{o}</option>)}
        </select>
        <div className="pointer-events-none absolute top-[10px] right-[5px] flex"><Arrow /></div>
      </div>
    </div>
  );
}

function BoundaryDialog() {
  const [row, setRow] = useState(0);
  return (
    <div role="dialog" aria-label="部件边界" className="absolute top-0 right-[36px] w-[328px] border border-t-0 border-[#dcdcdc] bg-[#efefef] text-[#1a1a1a]">
      <div className="-mx-px flex h-6 items-center bg-[#549fb8] px-2 text-[13px] text-white">
        <Icon size={15}><circle cx="12" cy="12" r="7" stroke="#fff" strokeWidth="4" /><path d="M12 0v5M12 19v5M0 12h5M19 12h5M3.500 3.500L7 7M17 17l3.500 3.500M3.500 20.500L7 17M17 7l3.500-3.500" stroke="#fff" strokeWidth="3.500" /></Icon>
        <span className="ml-[9px] flex-1">部件边界</span>
        <button aria-label="重置" className="mr-[6px]"><Icon size={14}><path d="M15 4a8.500 8.500 0 1 1-12 7" stroke="#fff" strokeWidth="2.800" /><path d="M3 3h9v9z" fill="#fff" /></Icon></button>
        <button aria-label="关闭"><Icon size={15}><path d="M4 4l16 16M20 4L4 20" stroke="#fff" strokeWidth="3.500" /></Icon></button>
      </div>

      <div className="px-[5px] pt-1">
        <section className="border-b border-[#c6c6c6] bg-white pb-2">
          <SectionTitle>边界</SectionTitle>
          <div className="mt-[5px] flex flex-col gap-[2px] px-[9px]">
            <Field id="tool-side" label="刀具侧" options={['外侧', '内侧']} active />
            <Field id="plane" label="平面" options={['自动', '指定']} />
            <button className="flex h-6 items-center justify-between border border-[#dcdcdc] bg-[#efefef] px-[6px] pl-2 text-[12px] text-[#046587]">定制边界数据<Chevron /></button>
            <div className="border border-[#dcdcdc] bg-[#efefef] pb-2">
              <button className="flex h-[22px] w-full items-center justify-between pr-[6px] pl-2 text-[12px] text-[#046587]">列表<Chevron up /></button>
              <div className="mt-[7px] flex items-start gap-[3px] pr-2 pl-[9px]">
                <div className="min-w-0 flex-1 border border-[#dcdcdc] bg-white">
                  <table className="w-full table-fixed text-left text-[12px]">
                    <thead>
                      <tr className="h-[21px] bg-[#efefef]">
                        <th className="w-[100px] border-r border-[#d5d5d5] pl-[6px] font-normal">方法</th>
                        <th className="w-[100px] border-r border-[#d5d5d5] pl-[6px] font-normal">类型</th>
                        <th className="pl-[6px] font-normal">刀具侧</th>
                      </tr>
                    </thead>
                    <tbody>
                      {[['面', '封闭', '外侧'], ['', '', ''], ['', '', '']].map((r, i) => (
                        <tr key={i} onClick={() => setRow(i)} className={clsx('h-5 border-b border-[#ededed]', row === i ? 'bg-[#8bc2d2]' : 'bg-[#fcfcfc]')}>
                          {r.map((c, j) => <td key={j} className="border-r border-[#e3e3e3] pl-[3px] last:border-r-0">{c}</td>)}
                        </tr>
                      ))}
                    </tbody>
                  </table>
                  <HScroll thumb="w-[133px]" />
                </div>
                <button aria-label="移除" className="flex h-6 w-6 items-center justify-center border border-[#999] bg-[#ececec]">
                  <Icon size={17}><path d="M3 3c6 4 12 11 18 18M20 3C14 7 8 14 3 21" stroke="#222" strokeWidth="3.200" /></Icon>
                </button>
              </div>
            </div>
            <div className="flex h-8 items-center justify-between text-[12px]">
              信息
              <button aria-label="信息" className="flex h-8 w-8 items-center justify-center border border-[#a3a3a3] bg-white">
                <Icon size={22}><path d="M2 2h20v20H2z" fill="#f4f6ff" stroke="#2a2a9e" strokeWidth="1.600" /><path d="M10 5h4v3h-4zM8 10h6v7h2v2H8v-2h2v-5H8z" fill="#0a0a55" /></Icon>
              </button>
            </div>
          </div>
        </section>
        <section className="mt-[3px] border-b border-[#c6c6c6] bg-white pb-2">
          <SectionTitle>成员</SectionTitle>
          <div className="mt-1 px-[9px]">
            <button className="flex h-6 w-full items-center justify-between border border-[#dcdcdc] bg-[#efefef] pr-[6px] pl-2 text-[12px] text-[#046587]">列表<Chevron /></button>
          </div>
        </section>
        <button aria-label="折叠" className="flex h-[18px] w-full items-center justify-center border-b border-[#d0d0d0]"><svg width="9" height="5"><path d="M0 5h9L4.500 0z" fill="#111" /></svg></button>
      </div>
      <div className="flex justify-end gap-[5px] pt-2 pr-[15px] pb-[9px] text-[12px]">
        <button className="h-[25px] w-[54px] bg-[#72b2c7] text-white">确定</button>
        <button className="h-[25px] w-[54px] border border-[#a3a3a3] bg-[#dcdcdc]">取消</button>
      </div>
    </div>
  );
}

function NavigatorPanel() {
  return (
    <aside className="flex w-[290px] shrink-0 flex-col justify-end border-l border-[#999] bg-white pr-[5px] pb-[5px] pl-[9px] text-[14px] text-[#046587]">
      <div className="border border-[#dcdcdc]"><HScroll thumb="w-[115px]" /></div>
      <div className="mt-[2px] h-[5px] border border-[#a8a8a8] bg-[#dcdcdc]" />
      {['相依性', '细节'].map((t) => (
        <button key={t} className="flex h-6 items-center justify-between border-b-2 border-[#cfcfcf] px-[6px]">{t}<Chevron /></button>
      ))}
    </aside>
  );
}

/* ---------- resource bar ---------- */
const resources: { name: string; slot: string; pic: ReactNode }[] = [
  { name: '装配导航器', slot: 'h-[42px]', pic: <><path d="M1 2l4-2 3 2v5l-4 2-3-2zM1 8l4-1 4 2v5l-4 1-4-2zM7 7l4-1 3 2v4l-3 2-4-2z" fill="#fcc81c" stroke="#b57f0a" strokeWidth=".8" /><path d="M14 13h8" stroke="#111" /><path d="M5 15v10M5 19h6" stroke="#1b2fa0" strokeWidth="1.200" /><path d="M12 19l4-2 4 2v4l-4 2-4-2z" fill="#fcc81c" stroke="#b57f0a" strokeWidth=".8" /></> },
  { name: '约束导航器', slot: 'h-[42px]', pic: <><path d="M3 1l8 5-8 5zM20 1l-8 5 8 5z" fill="#1717b8" /><path d="M11 0v25" stroke="#222" strokeDasharray="3 1" /><path d="M1 15h9v9H1z" fill="#ffee20" stroke="#7a701a" /><path d="M13 14l9 10h-9z" fill="#d51717" stroke="#801010" /></> },
  { name: '部件导航器', slot: 'h-[42px]', pic: <><path d="M1 3v8c2 2 8 2 10 0V3z" fill="#b65295" /><ellipse cx="6" cy="3" rx="5" ry="2" fill="#f2cfe3" stroke="#8d2c6c" /><path d="M13 10h9" stroke="#111" /><path d="M5 14v11M5 19h6" stroke="#1b2fa0" strokeWidth="1.200" /><circle cx="17" cy="19" r="4" fill="#f4d9ea" stroke="#8d2c6c" strokeWidth="1.300" /><circle cx="17" cy="19" r="1.500" stroke="#8d2c6c" /></> },
  { name: '工序导航器', slot: 'h-11 border-y border-r border-[#a3a3a3] bg-white', pic: <><path d="M4 1h4v11h2l-4 4-4-4h2z" fill="#3a83dc" stroke="#245ba8" strokeWidth=".8" /><path d="M8 3h9l-3 3H8M8 9h5" stroke="#3a83dc" /><path d="M13 11h9" stroke="#111" /><path d="M5 16v9M5 20h6" stroke="#1b2fa0" strokeWidth="1.200" /><path d="M14 16h3v4l4 1v3h-7z" fill="#e3eeff" stroke="#2460c0" /></> },
  { name: '机床导航器', slot: 'h-[42px]', pic: <><path d="M1 6l14-5v11L1 20z" fill="#f1edf6" stroke="#82619e" /><path d="M1 11l14-6M1 15l14-6M5 4v14M10 3v12" stroke="#e08b52" /><path d="M8 14l10-4 5 4v5l-7 5-8-4z" fill="#3983df" /><path d="M8 14l10-4 5 4-7 3z" fill="#ffad42" /></> },
  { name: '加工特征导航器', slot: 'h-[42px]', pic: <><path d="M1 8h9l6-3 5 2v15H1z" fill="#d8d8d8" stroke="#555" /><path d="M4 8v10M10 8v14M12 11h4v6h-4z" fill="#fff" stroke="#444" /><path d="M8 5c1-4 5-4 8-2l5-2v7" stroke="#e3491c" strokeWidth="2.500" /></> },
  { name: '重用库', slot: 'h-[42px]', pic: <><path d="M1 6l4-4h5l-3 4v17H1z" fill="#f78b1f" /><path d="M7 6l4-4h5l-3 4v17H7z" fill="#38bd37" /><path d="M13 6l4-4h6v16l-3 5h-7z" fill="#2579d8" /><path d="M1 6h18M7 6v17M13 6v17M19 6v17M14 11h5M14 18h5M2 11h4M8 18h4" stroke="#fff" strokeWidth=".9" /></> },
  { name: '视图导航器', slot: 'h-[40px] mb-[13px]', pic: <><path d="M2 15c5-7 15-7 19 0-5 3-13 3-19 0z" fill="#f4f4f4" stroke="#666" /><circle cx="12" cy="14" r="4" fill="#69a833" /><circle cx="12" cy="14" r="1.800" fill="#173a0a" /><path d="M3 11L1 9M6 9L4 6M9 8L8 4M12 7V4M15 8l2-4M18 10l3-3M20 12l2-2M2 14c4-7 14-8 19 0" stroke="#333" strokeWidth="1.200" /></> },
  { name: 'HD3D 工具', slot: 'h-[42px]', pic: <><path d="M9 4c8 0 12 5 12 13M10 1c9-1 14 6 14 14M9 8c5 0 8 4 8 8" stroke="#3474d2" strokeWidth="2" /><circle cx="8" cy="17" r="7.500" fill="#1f74dd" stroke="#1254a8" /><path d="M7 11h3v2H7zM6 15h4v5h1v1H6v-1h1v-4H6z" fill="#fff" /></> },
];

function ResourceBar() {
  return (
    <div className="flex w-[33px] shrink-0 flex-col border-l border-[#9c9c9c] bg-[#dadada]">
      <button aria-label="资源条选项" className="mb-[15px] flex h-[26px] shrink-0 items-center justify-center">
        <Icon size={15}><circle cx="12" cy="12" r="7.500" stroke="#222" strokeWidth="2" /><circle cx="12" cy="12" r="1.500" fill="#222" /><path d="M12 1v4M12 19v4M1 12h4M19 12h4M4 4l3 3M17 17l3 3M4 20l3-3M17 7l3-3" stroke="#222" strokeWidth="2" /></Icon>
      </button>
      {resources.map((r) => (
        <button key={r.name} aria-label={r.name} className={clsx('flex shrink-0 items-center pl-[2px]', r.slot)}>
          <svg width="24" height="26" viewBox="0 0 24 26" fill="none" className="shrink-0">{r.pic}</svg>
        </button>
      ))}
      <svg viewBox="0 3 28 22" className="h-[22px] w-[28px] shrink-0" fill="none"><path d="M1 15c6 4 10 2 14 0s8-3 13-1" stroke="#777" strokeWidth="1.500" /></svg>
      <div className="mt-[2px] flex flex-col items-center gap-[11px] pr-1">
        <svg width="7" height="6"><path d="M0 3.500h7L3.500 0zM0 5h7v1H0z" fill="#aaa" /></svg>
        <svg width="7" height="4"><path d="M0 4h7L3.500 0z" fill="#aaa" /></svg>
        <Arrow />
        <svg width="8" height="7"><path d="M0 0h8v1H0zM.5 3h7L4 7z" fill="#111" /></svg>
      </div>
    </div>
  );
}

const MeterOverlay = () => (
  <div className="absolute top-[259px] right-0 flex h-[59px] w-[10px] flex-col items-end justify-center gap-px rounded-l-sm bg-[#3b424f] pr-[2px]">
    {Array.from({ length: 23 }, (_, i) => (
      <i key={i} className={clsx('h-px w-[4px] shrink-0', i < 10 ? 'bg-[#151922]' : i < 14 ? 'bg-[#cfd75c]' : i < 19 ? 'bg-[#7fd58a]' : 'bg-[#63ccd0]')} />
    ))}
  </div>
);

const Watermark = () => (
  <div className="pointer-events-none absolute right-[26px] -bottom-4 flex w-[258px] items-end justify-between">
    <svg width="74" height="80" viewBox="0 0 74 82" opacity=".75">
      <path d="M37 0L72 20V61L37 81L2 61V20z" fill="#5fc8f7" />
      <path d="M37 0L52 8 56 28 37 16 2 26V20z" fill="#c3eafb" />
      <path d="M2 24Q20 12 38 16L18 28V54L16 68 2 61z" fill="#8fd6f9" />
      <path d="M52 8L72 20V58Q60 58 53 54L56 52V28z" fill="#69cbf8" />
      <path d="M18 54L37 65 72 60 37 81 22 72z" fill="#56bdf2" />
      <path d="M37 17l20 11v25L37 64 17 53V28z" fill="#fff" />
      <path d="M37 23l15 8-15 9-15-9z" fill="#94d8f8" /><path d="M22 32l14 8v18l-14-8z" fill="#6cc6ef" /><path d="M52 32l-14 8v18l14-8z" fill="#46b2ee" />
      <path d="M2 24Q20 12 38 16M52 8Q60 28 56 50M72 59Q52 60 37 65M18 54Q14 62 22 72M18 28Q14 46 18 66" fill="none" stroke="#fff" strokeWidth="1.500" />
    </svg>
    <b className="pb-7 text-[32px] leading-9 text-white/50">网</b>
  </div>
);

/* ---------- bottom ---------- */
const tasks: { name: string; w: string; open: boolean; pic: ReactNode }[] = [
  { name: '开始', w: 'w-[54px]', open: false, pic: <ellipse cx="14" cy="14" rx="13" ry="12" fill="#c3dbee" stroke="#2b5c86" /> },
  { name: '应用', w: 'w-[67px]', open: false, pic: <path d="M8 5l14-2-2 6H6z" fill="#d6284c" /> },
  { name: '浏览器', w: 'w-[60px]', open: true, pic: <circle cx="14" cy="14" r="11" fill="#1d8ce8" /> },
  { name: '文件', w: 'w-[62px]', open: false, pic: <circle cx="14" cy="14" r="11" fill="#3cc8d8" /> },
  { name: '文件夹', w: 'w-[57px]', open: true, pic: <path d="M6 6h15v3H6z" fill="#c9b27a" /> },
  { name: '工具', w: 'w-[60px]', open: true, pic: <path d="M11 8l6-4 5 1-4 4z" fill="#555" /> },
  { name: '安全', w: 'w-[60px]', open: true, pic: <><path d="M0 9V6q0-3 3-3h11v6z" fill="#ffcb1c" /><path d="M14 3h11q3 0 3 3v3H14z" fill="#82e632" /></> },
  { name: 'NX', w: 'w-[60px]', open: true, pic: <path d="M8 5l14-2-2 6H6z" fill="#d6284c" /> },
];

function Taskbar() {
  return (
    <footer className="flex h-2 shrink-0 overflow-hidden border-t border-[#33414f] bg-linear-to-r from-[#a5bfdc] from-40% to-[#7d92ab] to-70%">
      {tasks.map((t, i) => (
        <button key={t.name} aria-label={t.name} className={clsx('flex h-8 shrink-0 items-start justify-center rounded-sm', t.w, i > 3 && 'ml-[2px]', t.open ? 'border border-[#4a5b6e] bg-[#dbe6f2]' : i < 1 && 'bg-[#93a9c0]/60')}>
          <svg width="28" height="10" fill="none">{t.pic}</svg>
        </button>
      ))}
      <time className="mr-[42px] ml-auto pt-[2px] text-[11px] leading-4 text-white">15:50</time>
      <button aria-label="显示桌面" className="h-8 w-[14px] border border-[#35414e] bg-[#8b97a3]" />
    </footer>
  );
}

export default function App() {
  return (
    <div className="flex h-screen flex-col overflow-hidden bg-white font-['Noto_Sans','Noto_Sans_CJK_SC',sans-serif] text-[#111]">
      <TitleBar />
      <MenuBar />
      <StandardToolbar />
      <MachiningToolbar />
      <SelectionBar />
      <main className="relative flex min-h-0 flex-1 border-y border-[#8c8c8c]">
        <GraphicsWindow />
        <NavigatorPanel />
        <ResourceBar />
        <BoundaryDialog />
        <MeterOverlay />
        <Watermark />
      </main>
      <div role="status" className="flex h-[21px] shrink-0 items-center justify-between bg-white pr-[55px] pl-[3px] text-[11px] font-medium">
        选择部件边界
        <button aria-label="全屏"><Icon size={16}><path d="M1 6V1h5M18 1h5v5M1 18v5h5M18 23h5v-5" stroke="#999" strokeWidth="1.500" /><path d="M5 5h14v14H5z" fill="#fff" stroke="#444" strokeWidth="2" /><path d="M7 10h10v7H7z" fill="#4779c8" /></Icon></button>
      </div>
      <Taskbar />
    </div>
  );
}
